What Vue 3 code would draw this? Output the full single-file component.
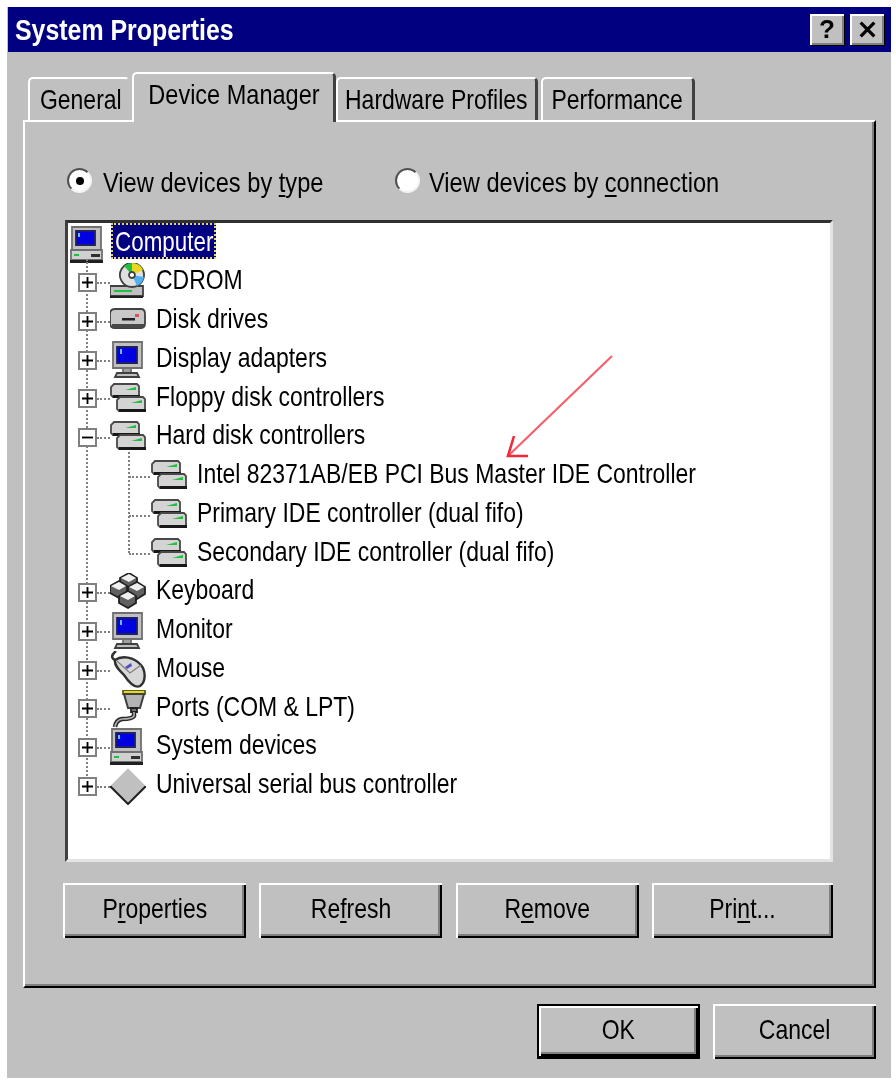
<script setup>
const C = { g: '#c0c0c0', d: '#707070', k: '#000', w: '#fff', b: '#0000e0', n: '#000080', gr: '#20c040', y: '#e8d820' }

const computer = [
  { d: 'M2 1H31V24H2Z', f: C.g, s: C.d },
  { d: 'M6 5H25V19H6Z', f: C.b, s: '#202060' },
  { d: 'M8 7H10V11H8Z', f: '#60c0ff' },
  { d: 'M1 24H32V34H1Z', f: '#d0d0d0', s: C.d },
  { d: 'M4 28H9V30H4Z', f: C.gr },
  { d: 'M21 28H30V31H21Z', f: '#303030' },
  { d: 'M0 34H33V37H0Z', f: '#202020' }
]
const monitor = [
  { d: 'M3 1H32V27H3Z', f: C.g, s: C.d },
  { d: 'M7 6H27V22H7Z', f: C.b, s: '#202060' },
  { d: 'M10 8H12V13H10Z', f: '#60c0ff' },
  { d: 'M13 27H21V32H13Z', f: '#a0a0a0', s: C.d },
  { d: 'M7 32H27L29 36H5Z', f: C.g, s: '#404040' }
]
const ctrlDrive = (x, y, w, h) => [
  { d: `M${x + 3} ${y}H${x + w - 2}L${x + w} ${y + 2}V${y + h}H${x + 2}L${x} ${y + h - 2}V${y + 3}Z`, f: '#d4d4d4', s: '#484848' },
  { d: `M${x + w - 14} ${y + 6}L${x + w - 3} ${y + 3}V${y + 6}H${x + w - 14}Z`, f: C.gr },
  { d: `M${x + 2} ${y + h - 2}H${x + w + 1}V${y + h + 1}H${x + 2}Z`, f: '#181818' }
]
const controller = [...ctrlDrive(1, 4, 28, 13), ...ctrlDrive(7, 17, 28, 14)]
const key = (x, y) => [
  { d: `M${x} ${y + 5}L${x + 9} ${y}L${x + 17} ${y + 5}V${y + 12}L${x + 9} ${y + 17}L${x} ${y + 12}Z`, f: '#606060', s: '#202020' },
  { d: `M${x + 1} ${y + 5}L${x + 9} ${y + 1}L${x + 16} ${y + 5}L${x + 9} ${y + 9}Z`, f: '#f0f0f0' }
]
const icons = {
  computer,
  monitor,
  controller,
  cdrom: [
    { d: 'M0 23H33V33H0Z', f: C.g, s: '#404040' },
    { d: 'M4 27H22V29H4Z', f: C.gr },
    { d: 'M0 33H33V35H0Z', f: '#202020' },
    { d: 'M22 0A12 12 0 1 1 21.9 0Z', f: '#e0e0e0', s: '#404040' },
    { d: 'M22 12L14 3A12 12 0 0 1 22 0Z', f: C.gr },
    { d: 'M22 12L22 0A12 12 0 0 1 33 7Z', f: C.y },
    { d: 'M22 12L34 14A12 12 0 0 1 27 23Z', f: '#50b0f0' },
    { d: 'M22 9A3 3 0 1 1 21.9 9Z', f: C.w, s: '#404040' }
  ],
  disk: [
    { d: 'M5 7H31Q35 7 35 12V21Q35 26 31 26H5Q0 26 0 21V12Q0 7 5 7Z', f: '#c8c8c8', s: '#404040' },
    { d: 'M2 22H34V26H2Z', f: '#484848' },
    { d: 'M12 16H25V18.5H12Z', f: '#202020' },
    { d: 'M25 12H29V15H25Z', f: '#e05050' }
  ],
  keyboard: [...key(10, 0), ...key(0, 8), ...key(18, 9), ...key(9, 18)],
  mouse: [
    { d: 'M6 0C1 4 1 7 5 9', n: 1, s: '#303030', w: 2.5 },
    { d: 'M5 9C12 4 24 6 31 14C36 20 36 31 30 35C24 38 18 30 14 24C10 20 4 15 5 9Z', f: '#d8d8d8', s: '#303030', w: 2.4 },
    { d: 'M7 10L20 22L31 14', n: 1, s: '#808080', w: 1.2 },
    { d: 'M15 16L21 12L22 15L17 18Z', f: '#5050c0' }
  ],
  ports: [
    { d: 'M13 0H35V4H13Z', f: C.y, s: '#606020' },
    { d: 'M14 4H34L30 18H18Z', f: '#b4b4b4', s: '#404040', w: 2 },
    { d: 'M21 18H27V22H21Z', f: '#707070', s: '#202020' },
    { d: 'M24 22V26Q22 29 12 29Q6 30 5 37', n: 1, s: '#282828', w: 4.5 },
    { d: 'M24 22V26Q22 29 12 29Q6 30 5 37', n: 1, s: '#b0b0b0', w: 1.6 }
  ],
  usb: [
    { d: 'M18 1L36 19L18 37L0 19Z', f: C.g },
    { d: 'M36 19L18 37L0 19', n: 1, s: '#202020', w: 2 },
    { d: 'M0 19L18 1L36 19', n: 1, s: '#f0f0f0', w: 1 }
  ]
}

const rows = [
  { label: 'CDROM', icon: 'cdrom', box: '+' },
  { label: 'Disk drives', icon: 'disk', box: '+' },
  { label: 'Display adapters', icon: 'monitor', box: '+' },
  { label: 'Floppy disk controllers', icon: 'controller', box: '+' },
  { label: 'Hard disk controllers', icon: 'controller', box: '-' },
  { label: 'Intel 82371AB/EB PCI Bus Master IDE Controller', icon: 'controller', child: true },
  { label: 'Primary IDE controller (dual fifo)', icon: 'controller', child: true },
  { label: 'Secondary IDE controller (dual fifo)', icon: 'controller', child: true },
  { label: 'Keyboard', icon: 'keyboard', box: '+' },
  { label: 'Monitor', icon: 'monitor', box: '+' },
  { label: 'Mouse', icon: 'mouse', box: '+' },
  { label: 'Ports (COM & LPT)', icon: 'ports', box: '+' },
  { label: 'System devices', icon: 'computer', box: '+' },
  { label: 'Universal serial bus controller', icon: 'usb', box: '+' }
]
</script>

<template>
  <div class="dialog">
    <header class="titlebar">
      <span class="tx title">System Properties</span>
      <div class="caption-btns">
        <span class="cap">?</span>
        <span class="cap">
          <svg viewBox="0 0 20 20" width="17" height="17"><path d="M2 2L18 18M18 2L2 18" stroke="#000" stroke-width="3.8" fill="none" /></svg>
        </span>
      </div>
    </header>

    <div class="tabs">
      <div class="tab w-general"><span class="tx">General</span></div>
      <div class="tab active w-device"><span class="tx">Device Manager</span></div>
      <div class="tab w-hardware"><span class="tx">Hardware Profiles</span></div>
      <div class="tab w-perf"><span class="tx">Performance</span></div>
    </div>

    <section class="panel">
      <div class="radios">
        <label class="radio first"><i class="dot checked"></i><span class="tx">View devices by <u>t</u>ype</span></label>
        <label class="radio second"><i class="dot"></i><span class="tx">View devices by <u>c</u>onnection</span></label>
      </div>

      <div class="list">
        <div class="root-row">
          <svg class="icon" viewBox="0 0 36 38" width="36" height="38">
            <path v-for="(p, i) in icons.computer" :key="i" :d="p.d" :fill="p.n ? 'none' : p.f" :stroke="p.s || 'none'" :stroke-width="p.w || 1.8" />
          </svg>
          <span class="selected"><span class="tx">Computer</span></span>
        </div>
        <div class="tree">
          <i class="trunk"></i>
          <i class="branch"></i>
          <div v-for="r in rows" :key="r.label" class="row" :class="{ child: r.child }">
            <span v-if="r.box" class="box">
              <svg viewBox="0 0 12 12" width="12" height="12">
                <path :d="r.box === '+' ? 'M0 6H12M6 0V12' : 'M0 6H12'" stroke="#000" stroke-width="2" />
              </svg>
            </span>
            <i class="stub"></i>
            <svg class="icon" viewBox="0 0 36 38" width="36" height="38">
              <path v-for="(p, i) in icons[r.icon]" :key="i" :d="p.d" :fill="p.n ? 'none' : p.f" :stroke="p.s || 'none'" :stroke-width="p.w || 1.8" />
            </svg>
            <span class="tx label">{{ r.label }}</span>
          </div>
        </div>
        <svg class="arrow" viewBox="0 0 130 115" width="130" height="115">
          <path d="M122 11L18 111" stroke="#f4606c" stroke-width="2.2" fill="none" />
          <path d="M24 91L18 111H38" stroke="#f02838" stroke-width="2.6" fill="none" />
        </svg>
      </div>

      <div class="actions">
        <button class="btn"><span class="tx mid">P<u>r</u>operties</span></button>
        <button class="btn"><span class="tx mid">Re<u>f</u>resh</span></button>
        <button class="btn"><span class="tx mid">R<u>e</u>move</span></button>
        <button class="btn last"><span class="tx mid">Pri<u>n</u>t...</span></button>
      </div>
    </section>

    <footer class="footer">
      <button class="btn default"><span class="tx mid">OK</span></button>
      <button class="btn cancel"><span class="tx mid">Cancel</span></button>
    </footer>
  </div>
</template>

<style>
html, body { margin: 0; background: #fff; }
</style>

<style scoped>
.dialog {
  box-sizing: border-box;
  width: 884px;
  height: 1071px;
  margin: 7px 0 0 7px;
  background: #c0c0c0;
  font-family: "Liberation Sans", Arial, sans-serif;
  font-size: 28px;
  color: #000;
  filter: blur(0.55px);
  overflow: hidden;
}
.tx {
  display: inline-block;
  white-space: nowrap;
  transform: scaleX(0.82);
  transform-origin: left center;
  line-height: 1;
}
.tx.mid, .tab .tx { transform-origin: center; }
.tx u { text-decoration-thickness: 2px; text-underline-offset: 3px; }

.titlebar {
  height: 45px;
  margin-left: 1px;
  padding: 0 7px 0 7px;
  background: #000080;
  display: flex;
  align-items: center;
  justify-content: space-between;
}
.title { font-size: 30px; font-weight: 700; color: #fff; transform: scaleX(0.83); }
.caption-btns { display: flex; gap: 6px; }
.cap {
  box-sizing: border-box;
  width: 34px;
  height: 31px;
  background: #c0c0c0;
  box-shadow: inset 2px 2px 0 #fff, inset -2px -2px 0 #808080, 1px 1px 0 #000;
  display: flex;
  align-items: center;
  justify-content: center;
  font-weight: 700;
  font-size: 26px;
}

.tabs {
  display: flex;
  align-items: flex-end;
  height: 68px;
  padding-left: 21px;
  position: relative;
  z-index: 1;
}
.tab {
  box-sizing: border-box;
  height: 43px;
  background: #c0c0c0;
  border-top: 2px solid #fff;
  border-left: 2px solid #fff;
  border-right: 3px solid #404040;
  border-radius: 5px 5px 0 0;
  display: flex;
  align-items: center;
  justify-content: center;
}
.tab.active {
  height: 50px;
  margin-bottom: -2px;
  position: relative;
  z-index: 2;
  padding-bottom: 6px;
}
.tab.active .tx { transform: scaleX(0.84); }
.w-general { width: 102px; margin-right: 2px; border-right-color: #c0c0c0; padding-left: 4px; }
.w-device { width: 204px; }
.w-hardware { width: 202px; margin-right: 3px; }
.w-perf { width: 154px; }

.panel {
  box-sizing: border-box;
  width: 853px;
  height: 868px;
  margin-left: 16px;
  padding: 45px 0 0 38px;
  border-top: 2px solid #fff;
  border-left: 2px solid #fff;
  border-right: 2px solid #000;
  border-bottom: 2px solid #000;
  box-shadow: inset -2px -2px 0 #808080;
}
.radios {
  display: flex;
  padding-left: 4px;
  height: 27px;
  align-items: center;
}
.radio { display: flex; align-items: center; gap: 11px; }
.radio.first { width: 328px; }
.radio.second { gap: 9px; }
.radio .tx { position: relative; top: 2px; transform: scaleX(0.845); }
.dot {
  box-sizing: border-box;
  width: 25px;
  height: 25px;
  border-radius: 50%;
  background: #fff;
  border: 2px solid;
  border-color: #505050 #f4f4f4 #f4f4f4 #505050;
  display: flex;
  align-items: center;
  justify-content: center;
  flex: none;
}
.dot.checked::after {
  content: "";
  width: 8px;
  height: 8px;
  border-radius: 50%;
  background: #000;
}

.list {
  position: relative;
  box-sizing: border-box;
  width: 768px;
  height: 642px;
  margin: 26px 0 0 2px;
  background: #fff;
  border-top: 3px solid #303030;
  border-left: 3px solid #404040;
  border-right: 3px solid #e4e4e4;
  border-bottom: 3px solid #e4e4e4;
}
.root-row {
  display: flex;
  align-items: center;
  height: 36px;
  padding-left: 2px;
  gap: 5px;
}
.root-row .icon { margin-top: 7px; }
.selected {
  box-sizing: border-box;
  width: 105px;
  height: 36px;
  background: #000080;
  color: #fff;
  outline: 2px dotted #e8d860;
  outline-offset: -2px;
  padding-left: 4px;
  display: flex;
  align-items: center;
}
.selected .tx { transform: scaleX(0.8); position: relative; top: 1px; }
.tree { position: relative; padding-top: 4px; }
.row {
  position: relative;
  height: 38.75px;
  display: flex;
  align-items: center;
  padding-left: 42px;
}
.row .icon { margin-right: 10px; position: relative; }
.row.child { padding-left: 83px; }
.label { position: relative; top: -2px; }
.box {
  position: absolute;
  left: 10px;
  top: 10px;
  box-sizing: border-box;
  width: 19px;
  height: 19px;
  border: 2px solid #808080;
  background: #fff;
  z-index: 1;
  display: flex;
  align-items: center;
  justify-content: center;
}
.box svg { width: 11px; height: 11px; }
.stub {
  position: absolute;
  left: 29px;
  top: 19px;
  width: 13px;
  border-top: 2px dotted #808080;
}
.row.child .stub { left: 61px; width: 21px; }
.trunk {
  position: absolute;
  left: 18px;
  top: 0;
  height: 520px;
  border-left: 2px dotted #808080;
}
.branch {
  position: absolute;
  left: 60px;
  top: 186px;
  height: 108px;
  border-left: 2px dotted #808080;
}
.arrow {
  position: absolute;
  left: 422px;
  top: 122px;
  overflow: visible;
  z-index: 2;
}

.actions {
  display: flex;
  gap: 13.3px;
  margin-top: 21px;
}
.btn {
  box-sizing: border-box;
  width: 183px;
  height: 55px;
  padding: 0 0 3px;
  font: inherit;
  color: #000;
  background: #c0c0c0;
  border: 0;
  box-shadow: inset 2px 2px 0 #fff, inset -2px -2px 0 #000, inset -4px -4px 0 #808080;
}
.btn.last { width: 181px; }
.footer {
  display: flex;
  justify-content: flex-end;
  gap: 13px;
  margin-top: 16px;
  padding-right: 15px;
}
.default {
  width: 163px;
  height: 55px;
  border: 2px solid #000;
  border-bottom-width: 3px;
}
.cancel { width: 163px; }
</style>
